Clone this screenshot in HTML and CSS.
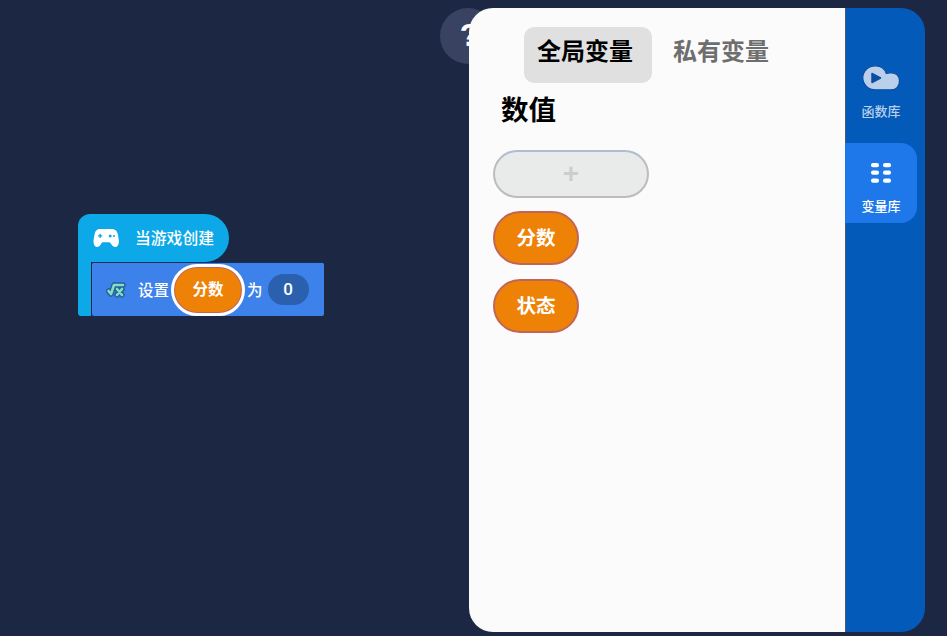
FILE: index.html
```html
<!DOCTYPE html>
<html lang="zh-CN">
<head>
    <meta charset="UTF-8">
    <meta name="viewport" content="width=device-width, initial-scale=1.0">
    <title>变量库</title>
    <link rel="stylesheet" href="styles.css">
</head>
<body>
    <div class="workspace">
        <div class="help-btn">?</div>

        <div class="block-stack">
            <div class="hat-block">
                <svg class="hat-icon" viewBox="0 0 26 20" width="26" height="20">
                    <path fill="#fff" d="M7 1h12c3.400 0 5.200 2.200 5.900 5.600l.9 5.600c.5 3.700-1.300 6.800-3.700 6.800-2 0-3.100-1.600-4.300-3.400-.6-.9-1.200-1.400-2.300-1.400h-5c-1.100 0-1.700.5-2.300 1.400C7.400 17.400 6.300 19 4.300 19 1.900 19 .1 15.900.6 12.200l.9-5.600C2.200 3.200 3.600 1 7 1z"/>
                    <path fill="#0ca8e8" d="M6.500 5.800h1.300v1.500h1.500v1.300H7.800v1.500H6.500V8.600H5V7.300h1.500z"/>
                    <circle cx="17.200" cy="8" r="1.500" fill="#0ca8e8"/>
                    <circle cx="21" cy="8" r="1" fill="#0ca8e8"/>
                </svg>
                <span class="hat-label">当游戏创建</span>
            </div>
            <div class="block-body">
                <div class="block-spine"></div>
                <div class="set-block">
                    <svg class="fx-icon" viewBox="0 0 20 16" width="20" height="16">
                        <path fill="none" stroke="#2a5c9c" stroke-width="5.500" stroke-linecap="round" stroke-linejoin="round" d="M2.500 9l2.500 3L8 3h9M11 7l5 6M16 7l-5 6"/>
                        <path fill="none" stroke="#7fe0c4" stroke-width="2.600" stroke-linecap="round" stroke-linejoin="round" d="M2.500 9l2.500 3L8 3h9M11 7l5 6M16 7l-5 6"/>
                    </svg>
                    <span class="block-text set-word">设置</span>
                    <div class="var-slot">分数</div>
                    <span class="block-text to-word">为</span>
                    <div class="value-slot">0</div>
                </div>
            </div>
        </div>
    </div>

    <div class="panel">
        <div class="panel-main">
            <div class="tabs">
                <div class="tab active">全局变量</div>
                <div class="tab">私有变量</div>
            </div>
            <h2 class="section-title">数值</h2>
            <div class="var-list">
                <div class="add-var">+</div>
                <div class="var-pill">分数</div>
                <div class="var-pill">状态</div>
            </div>
        </div>
        <div class="sidebar">
            <div class="side-item">
                <svg viewBox="0 0 38 26" width="38" height="26">
                    <path fill="#b9cfec" stroke="#0b4f9e" stroke-width="1.200" d="M13.500.8c5.200 0 9.400 3.200 10.800 7.700 1.100-.5 2.300-.7 3.700-.7h1.500c4.900 0 8 3.500 8 8.300 0 5-3.300 8.700-8 8.700H13.500C6.300 24.800.8 19.500.8 12.800S6.300.8 13.500.8z"/>
                    <path fill="#0b4f9e" stroke="#0b4f9e" stroke-width="1.500" stroke-linejoin="round" d="M10 8.500l8.500 4.500-8.500 4.500z"/>
                </svg>
                <span class="side-label">函数库</span>
            </div>
            <div class="side-item active">
                <svg viewBox="0 0 20 20" width="20" height="20">
                    <g fill="#fff">
                        <rect x="0" y="0" width="8" height="4.200" rx="2"/>
                        <rect x="12" y="0" width="8" height="4.200" rx="2"/>
                        <rect x="0" y="7.500" width="8" height="4.200" rx="2"/>
                        <rect x="12" y="7.500" width="8" height="4.200" rx="2"/>
                        <rect x="0" y="15.600" width="8" height="4.200" rx="2"/>
                        <rect x="12" y="15.600" width="8" height="4.200" rx="2"/>
                    </g>
                </svg>
                <span class="side-label">变量库</span>
            </div>
        </div>
    </div>
</body>
</html>
```

FILE: styles.css
```css
html, body {
    height: 100%;
}
body {
    margin: 0;
    background-color: #1c2744;
    font-family: "Noto Sans CJK SC", "Noto Sans", sans-serif;
    display: flex;
    justify-content: flex-end;
    padding: 8px 22px 4px 0;
    box-sizing: border-box;
    overflow: hidden;
}

/* free canvas behind the panel */
.workspace {
    position: absolute;
    top: 0;
    left: 0;
    width: 100%;
    height: 100%;
}
.help-btn {
    position: absolute;
    left: 440px;
    top: 8px;
    width: 56px;
    height: 56px;
    box-sizing: border-box;
    padding-left: 3px;
    border-radius: 50%;
    background-color: #3a4262;
    color: #fff;
    font-family: "Liberation Sans", sans-serif;
    font-size: 32px;
    font-weight: 700;
    line-height: 55px;
    text-align: center;
}
.block-stack {
    position: absolute;
    left: 78px;
    top: 214px;
    color: #fff;
}
.hat-block {
    width: 151px;
    height: 48px;
    box-sizing: border-box;
    background-color: #0ca8e8;
    border-radius: 12px 24px 24px 0;
    display: flex;
    align-items: center;
    padding-left: 15px;
}
.hat-label {
    margin-left: 16px;
    margin-bottom: 1px;
    font-size: 15.800px;
    font-weight: 500;
}
.block-body {
    display: flex;
    height: 54px;
}
.block-spine {
    width: 13px;
    background-color: #0ca8e8;
    border-radius: 0 0 0 3px;
}
.set-block {
    width: 232px;
    margin-left: 1px;
    background-color: #3d82ea;
    border-top: 1px solid #1b2f5c;
    box-sizing: border-box;
    border-radius: 2px;
    display: flex;
    align-items: center;
    padding-left: 14px;
}
.block-text {
    margin-bottom: 2px;
    font-size: 15.500px;
    font-weight: 500;
}
.set-word {
    margin-left: 12px;
}
.to-word {
    margin-left: 4px;
}
.var-slot {
    width: 70px;
    height: 48px;
    box-sizing: border-box;
    margin-left: 4px;
    background-color: #ee8207;
    border: 2px solid #c0655a;
    outline: 3px solid #fff;
    outline-offset: -1px;
    border-radius: 24px;
    font-size: 15.500px;
    font-weight: 700;
    line-height: 41px;
    text-align: center;
}
.value-slot {
    width: 41px;
    height: 31px;
    margin-left: 5px;
    background-color: #2b60ae;
    border-radius: 16px;
    font-family: "Roboto", sans-serif;
    font-size: 17px;
    font-weight: 500;
    line-height: 31px;
    text-align: center;
}

/* variable panel */
.panel {
    position: relative;
    width: 456px;
    height: 624px;
    display: flex;
    border-radius: 24px;
    overflow: hidden;
}
.panel-main {
    flex: 1;
    background-color: #fbfbfb;
    padding: 19px 0 0 24px;
}
.tabs {
    display: flex;
    padding-left: 31px;
    gap: 5px;
}
.tab {
    width: 128px;
    height: 56px;
    box-sizing: border-box;
    border-radius: 10px;
    font-size: 24px;
    font-weight: 700;
    line-height: 46px;
    text-align: center;
    color: #6e6e6e;
}
.tab.active {
    padding-right: 6px;
    background-color: #e0e0e0;
    color: #000;
}
.section-title {
    margin: 3px 0 0 8px;
    font-size: 27.500px;
    font-weight: 700;
    line-height: 44px;
    color: #000;
}
.var-list {
    display: flex;
    flex-direction: column;
    align-items: flex-start;
    gap: 13px;
    margin-top: 20px;
}
.add-var {
    width: 156px;
    height: 48px;
    box-sizing: border-box;
    background-color: #e9eaea;
    border: 2px solid #bcbcbc;
    border-top-color: #b0bdd0;
    border-radius: 24px;
    color: #cdcdcf;
    font-family: "Liberation Sans", sans-serif;
    font-size: 28px;
    font-weight: 700;
    line-height: 44px;
    text-align: center;
}
.var-pill {
    width: 86px;
    height: 54px;
    box-sizing: border-box;
    background-color: #ee8207;
    border: 2px solid #c0655a;
    border-radius: 27px;
    color: #fff;
    font-size: 19.500px;
    font-weight: 700;
    line-height: 48px;
    text-align: center;
}
.var-pill + .var-pill {
    margin-top: 1px;
}

.sidebar {
    width: 80px;
    background-color: #045ab9;
    padding-top: 57px;
    box-sizing: border-box;
    box-shadow: inset 1px 0 0 #4a5a70;
}
.side-item {
    width: 72px;
    height: 78px;
    display: flex;
    flex-direction: column;
    align-items: center;
    gap: 12px;
    box-sizing: border-box;
    color: #b9cfec;
}
.side-item.active {
    height: 80px;
    background-color: #1f78ea;
    border-radius: 0 16px 16px 0;
    color: #fff;
    padding-top: 20px;
    gap: 15px;
}
.side-label {
    font-size: 13px;
    font-weight: 500;
    line-height: 16px;
}
```
